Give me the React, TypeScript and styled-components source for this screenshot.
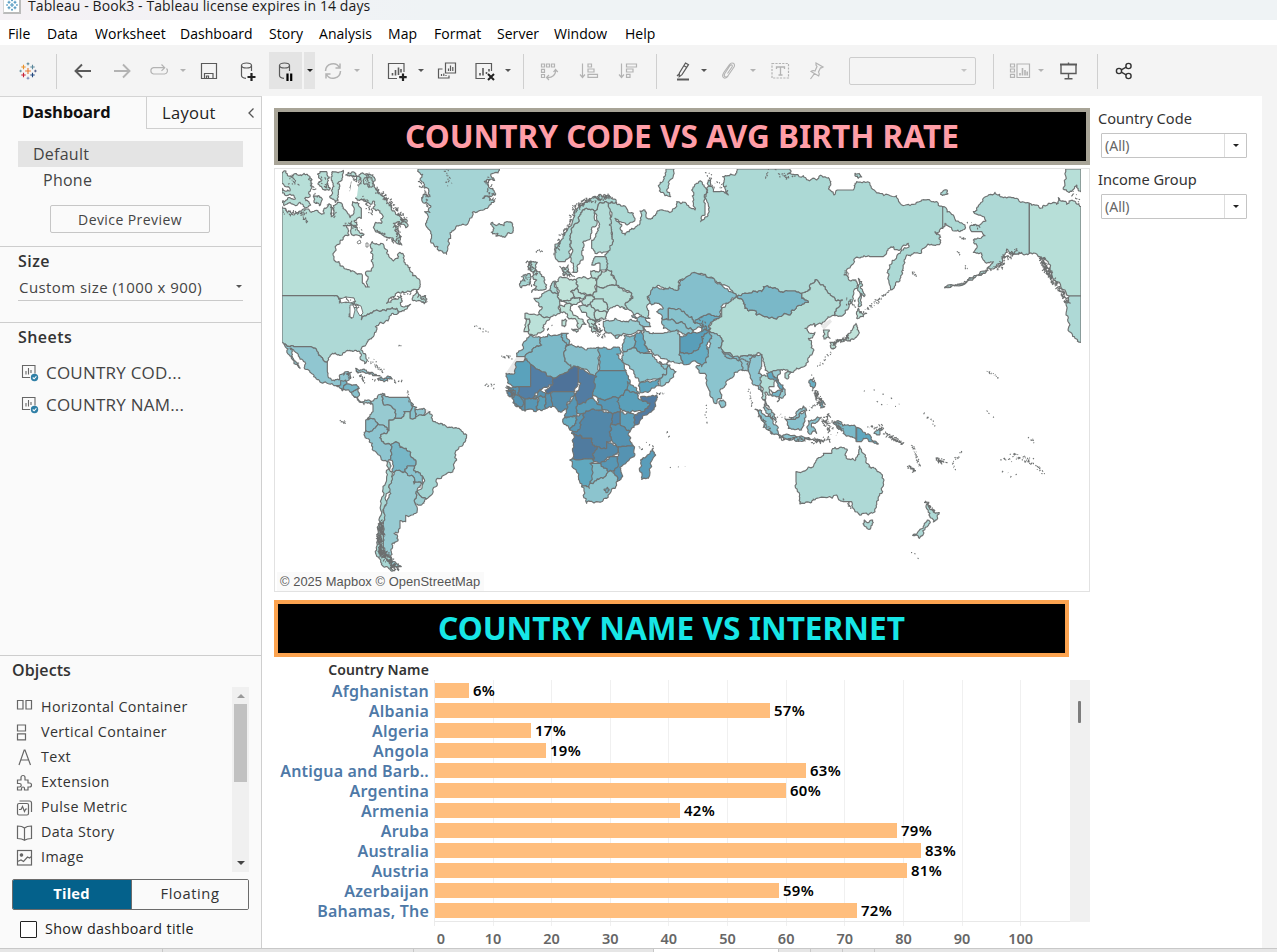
import React from "react";
import styled, { createGlobalStyle } from "styled-components";

const Global = createGlobalStyle`
  *{box-sizing:border-box}
  html,body{margin:0;padding:0;background:#fff}
  body{width:1277px;height:952px;overflow:hidden;font-family:"Open Sans","Noto Sans",sans-serif;color:#333}
`;

/* ---------- frame ---------- */
const Window = styled.div`width:1277px;height:952px;display:flex;flex-direction:column;overflow:hidden;background:#fff;`;
const TitleBar = styled.div`height:20px;flex:none;display:flex;align-items:flex-start;gap:7px;padding-left:3px;
  background:linear-gradient(90deg,#f5f1f5 0,#eff3f5 430px);
  span{font:14px/12px "Open Sans",sans-serif;letter-spacing:.1px;color:#1b1b1b;white-space:pre}`;
const AppBadge = styled.div`width:18px;height:18px;margin-top:-4px;background:#fff;border:1px solid #d5d5d5;border-right:2px solid #bbb;border-bottom:2px solid #bbb;flex:none;
  svg{display:block}`;
const MenuBar = styled.div`height:25px;flex:none;display:flex;align-items:center;background:#fff;padding:2px 0 0 8px;`;
const MenuItem = styled.span<{ $w: number }>`width:${p => p.$w}px;font:14px/20px "Open Sans",sans-serif;letter-spacing:.04px;color:#000;white-space:nowrap`;
const ToolBar = styled.div`height:51px;flex:none;display:flex;align-items:center;background:#f4f4f4;`;
const Sep = styled.i<{ $ml: number }>`width:1px;height:35px;margin-left:${p => p.$ml}px;background:#cfcfcf;flex:none;margin-top:1px`;
const Icon = styled.svg<{ $ml?: number; $c?: string; $sw?: number }>`width:24px;height:24px;flex:none;margin-left:${p => p.$ml ?? 0}px;fill:none;stroke:${p => p.$c ?? "#5a5a5a"};stroke-width:${p => p.$sw ?? 1.2};display:block`;
const Caret = styled.i<{ $ml?: number; $c?: string }>`width:8px;flex:none;margin-left:${p => p.$ml ?? 0}px;display:flex;justify-content:center;
  &::after{content:"";border:3px solid transparent;border-bottom:0;border-top-color:${p => p.$c ?? "#555"}}`;
const BigCaret = styled.i`width:21px;display:flex;justify-content:center;
  &::after{content:"";border:3.5px solid transparent;border-bottom:0;border-top-color:#222}`;
const Pressed = styled.div<{ $w: number; $ml: number }>`width:${p => p.$w}px;height:37px;margin-left:${p => p.$ml}px;background:#e4e4e4;display:flex;align-items:center;justify-content:center;flex:none`;
const EmptySelect = styled.div`width:127px;height:28px;margin-left:20px;border:1px solid #cdcdcd;border-radius:2px;display:flex;align-items:center;justify-content:flex-end;padding-right:7px;flex:none`;
const Body = styled.div`height:852px;flex:none;display:flex;`;

/* ---------- side panel ---------- */
const Side = styled.aside`width:262px;flex:none;background:#fafafa;border-right:1px solid #cfcfcf;border-top:1px solid #d4d4d4;display:flex;flex-direction:column;font-family:"Open Sans",sans-serif;`;
const Tabs = styled.div`display:flex;height:32px;margin-bottom:12px`;
const ActiveTab = styled.div`width:146px;padding-left:22px;font-weight:700;font-size:16.5px;line-height:30px;letter-spacing:-.15px;color:#111`;
const IdleTab = styled.div`flex:1;border-left:1px solid #cfcfcf;border-bottom:1px solid #cfcfcf;display:flex;align-items:center;justify-content:space-between;padding:0 6px 0 15px;font-size:16.5px;letter-spacing:.3px;color:#222;`;
const Device = styled.div<{ $on?: boolean; $pl: number }>`margin:0 18px;height:26px;line-height:26px;font-size:16px;letter-spacing:.25px;padding-left:${p => p.$pl}px;background:${p => p.$on ? "#e4e4e4" : "transparent"};color:#444`;
const PreviewButton = styled.div`width:160px;height:28px;margin:12px 0 0 50px;border:1px solid #c6c6c6;border-radius:2px;text-align:center;font-size:14px;line-height:27px;letter-spacing:.42px;color:#444;`;
const Section = styled.section<{ $h: number; $mt?: number }>`height:${p => p.$h}px;margin-top:${p => p.$mt ?? 0}px;border-top:1px solid #cdcdcd;flex:none`;
const Heading = styled.h3<{ $l?: number }>`margin:0 0 0 ${p => p.$l ?? 18}px;font-size:16px;line-height:28px;font-weight:600;letter-spacing:${p => p.$l ? .1 : .45}px;color:#333`;
const SizeField = styled.div`margin:0 18px;height:26px;border-bottom:1px solid #c9c9c9;display:flex;align-items:center;justify-content:space-between;padding:0 0 2px 1px;font-size:15px;letter-spacing:.43px;color:#444`;
const SheetList = styled.div`padding-top:5px`;
const SheetRow = styled.div`height:32px;display:flex;align-items:center;padding-left:19px;gap:5px;font-size:17px;letter-spacing:.22px;color:#444`;
const ObjectsArea = styled.div`display:flex;justify-content:space-between;margin:3px 12px 0 12px;height:185px`;
const ObjectList = styled.div`padding-top:7px;`;
const ObjectRow = styled.div`height:25px;display:flex;align-items:center;gap:5px;font-size:14.3px;color:#333;letter-spacing:.4px;svg{margin-top:3px}`;
const Scroll = styled.div`width:17px;background:#f0f0f0;display:flex;flex-direction:column;align-items:center;padding:7px 0;
  b{width:13px;height:78px;background:#c1c1c1;margin-top:6px}
  b+i{margin-top:auto}`;
const Up = styled.i`border:4px solid transparent;border-top:0;border-bottom-color:#999`;
const Down = styled.i`border:4px solid transparent;border-bottom:0;border-top-color:#444`;
const Toggle = styled.div`display:flex;height:31px;margin:7px 12px 0;border:1px solid #6b6b6b;border-radius:2px;overflow:hidden`;
const ToggleHalf = styled.div<{ $on?: boolean }>`width:${p => p.$on ? 120 : 116}px;margin:${p => p.$on ? "-1px 0 -1px -1px" : "0"};padding-top:${p => p.$on ? 1 : 0}px;background:${p => p.$on ? "#04618b" : "#fafafa"};color:${p => p.$on ? "#fff" : "#333"};font-weight:${p => p.$on ? 700 : 400};text-align:center;font-size:14.7px;letter-spacing:${p => p.$on ? .2 : .6}px;line-height:27px;border-right:${p => p.$on ? "1px solid #6b6b6b" : "0"}`;
const Check = styled.label`display:flex;align-items:center;gap:8px;margin:9px 0 0 20px;font-size:14.3px;line-height:19px;letter-spacing:.38px;color:#222;
  i{width:17px;height:17px;border:1.5px solid #222;border-radius:1px;background:#fff;margin-top:2px}`;

/* ---------- dashboard ---------- */
const Stage = styled.main`width:1000px;flex:none;padding:12px 0 0 12px;display:flex;gap:8px;background:#fff;`;
const Board = styled.div`width:816px;flex:none;`;
const Banner = styled.h1<{ $w: number; $bd: string; $c: string }>`margin:0;width:${p => p.$w}px;height:57px;border:4px solid ${p => p.$bd};background:#000;color:${p => p.$c};
  font:700 31.6px/48px "Noto Sans",sans-serif;text-align:center;white-space:nowrap;`;
const MapCard = styled.div`width:816px;height:424px;margin:3px 0 8px;border:1px solid #e2e2e2;display:flex;flex-direction:column;padding-left:7px;
  svg{display:block;flex:none}`;
const Credit = styled.div`font:12.9px/19px "Liberation Sans",Arial,sans-serif;color:#555;margin-left:-5px;width:207px;padding-left:3px;letter-spacing:.05px;background:#fafafa;white-space:nowrap`;
const Gutter = styled.div`flex:1;background:#f4f4f4`;
const Filters = styled.div`flex:1`;
const FilterName = styled.div`font:14.6px/21px "Noto Sans",sans-serif;height:20px;color:#333;margin-bottom:5px;white-space:nowrap`;
const FilterBox = styled.div`margin:0 15px 11px 3px;width:146px;height:25px;border:1px solid #c4c4c4;border-radius:1px;display:flex;align-items:center;color:#666;
  span{flex:1;padding-left:3px;border-right:1px solid #ddd;height:23px;font:14px/24px "Noto Sans",sans-serif}`;

const gridLines = "repeating-linear-gradient(90deg,transparent 0 57.6px,#f0f0f0 57.6px 58.62px)";
const ChartHead = styled.div`width:155px;height:23px;text-align:right;font:600 14px/25px "Noto Sans",sans-serif;letter-spacing:.12px;color:#333`;
const ChartBody = styled.div`display:flex;height:242px;width:816px`;
const Names = styled.div`width:155px;margin-right:5px;text-align:right;font:600 16px/22px "Noto Sans",sans-serif;letter-spacing:.2px;color:#4e79a7;div{height:20px;white-space:nowrap}`;
const Plot = styled.div`width:636px;border-bottom:1px solid #e8e8e8;border-left:1px solid #ececec;background:${gridLines};`;
const Ticks = styled.div`width:636px;height:4px;margin-left:160px;border-left:1px solid #ececec;background:${gridLines};`;
const BarRow = styled.div`height:20px;display:flex;align-items:center;gap:4px;font:600 14.9px/20px "Noto Sans",sans-serif;letter-spacing:.35px;color:#000;`;
const Bar = styled.i`height:15px;background:#ffbe7d;flex:none;margin-top:1px`;
const ChartScroll = styled.div`width:20px;background:#f0f0f0;padding:21px 0 0 8px;b{display:block;width:3px;height:22px;background:#7d7d7d;border-radius:1px}`;
const Axis = styled.div`display:flex;margin-left:131px;font:600 14.5px/20px "Noto Sans",sans-serif;color:#666;padding-top:2px;
  span{width:58.65px;flex:none;text-align:center} span:first-child{padding-left:13px}`;
const BottomStrip = styled.div`height:4px;flex:none;border-top:1px solid #c8c8c8;background:#e6e6e6;display:flex;
  i{height:4px;border-right:1px solid #c8c8c8} i:nth-child(4){background:#fff}`;

/* ---------- map ---------- */
type Shape = [string, string];
const noise = (a: number, b: number, c: number, d: number) => {
  const s = Math.sin(a * 12.9898 + b * 78.233 + c * 37.719 + d * 4.581) * 43758.5453;
  return s - Math.floor(s) - 0.5;
};
// Splits a border between two points into an irregular line; both neighbours get the same line.
const split = (a: number[], b: number[], n: number): number[][] => {
  const dx = b[0] - a[0], dy = b[1] - a[1], len = Math.hypot(dx, dy);
  if (n === 0 || len < 5 || dx === 0 || dy === 0) return [b];
  const f = a[0] < b[0] || (a[0] === b[0] && a[1] < b[1]);
  const [p, q] = f ? [a, b] : [b, a];
  const k = noise(p[0], p[1], q[0], q[1]) * 0.6 * Math.min(1, 20 / len);
  const m = [(p[0] + q[0]) / 2 - (q[1] - p[1]) * k, (p[1] + q[1]) / 2 + (q[0] - p[0]) * k];
  return [...split(a, m, n - 1), ...split(m, b, n - 1)];
};
const outline = (pts: string, depth: number) => {
  const v = pts.trim().split(/\s+/).map(s => s.split(",").map(Number));
  let out = [v[0]];
  v.forEach((p, i) => { out = out.concat(split(p, v[(i + 1) % v.length], depth)); });
  return "M" + out.map(p => p[0].toFixed(1) + "," + p[1].toFixed(1)).join("L") + "Z";
};

const CA = "#b7dfd8", US = "#aed9d6", MX = "#90c6d0", RU = "#acd9d5", NODATA = "#e8e8e8";

const northAmerica: Shape[] = [
  [CA, "24,125 38,140 60,150 78,138 100,132 112,142 128,136 150,146 158,128 165,116 172,128 172,155 180,140 178,122 190,112 205,118 214,135 228,158 238,148 236,110 250,112 262,130 262,160 240,168 250,180 236,182 208,182 222,192 225,210 200,225 185,250 180,285 195,290 198,302 225,314 250,328 265,330 265,350 275,366 286,366 280,345 275,328 292,318 298,300 292,285 290,262 288,240 295,230 320,235 340,255 350,280 358,288 372,280 378,262 388,278 400,300 408,318 430,340 438,355 436,368 400,378 370,382 348,400 338,415 360,402 380,395 385,408 380,420 400,425 410,418 390,438 372,445 368,430 355,428 345,432 308,435 285,448 262,464 264,444 262,430 245,422 240,400 210,402 178,392 24,392"],
  [CA, "215,30 232,22 246,30 245,45 230,62 232,82 245,100 270,102 290,118 300,108 298,130 318,138 328,155 322,175 305,172 298,188 320,205 345,218 365,230 380,238 376,208 362,195 372,185 358,175 375,170 395,188 400,168 378,155 352,128 330,95 310,75 300,65 302,40 285,28 255,30 262,50 248,66 255,34 236,34"],
  [CA, "24,25 36,18 52,35 72,30 90,25 108,35 112,62 108,95 92,100 110,120 88,124 78,112 64,122 48,112 30,122 24,108 48,98 64,102 46,88 24,84 24,70 48,78 30,60 24,55"],
  [CA, "138,20 158,20 166,36 160,58 168,72 150,74 132,55 144,45 134,38"],
  [CA, "175,20 208,16 206,34 190,55 196,72 192,98 184,112 168,98 172,76 180,64 172,42"],
  [CA, "118,94 134,92 142,110 136,122 120,112"],
  [CA, "270,42 288,36 298,50 290,66 272,58"],
  [CA, "235,180 250,188 270,208 262,218 250,210 240,212 230,196"],
  [CA, "415,405 428,375 434,390 455,392 456,412 440,408"],
  ["#a5d4d5", "432,12 446,28 438,42 450,66 465,78 468,95 448,88 445,110 470,122 468,142 452,140 460,165 455,180 470,205 480,240 495,258 518,268 524,240 530,212 545,187 580,178 595,142 630,134 662,108 640,94 626,100 655,92 664,90 655,70 635,50 662,46 650,30 672,24 676,12"],
  [RU, "650,178 656,172 666,182 676,176 690,182 708,170 718,188 712,205 692,217 665,213 672,206 652,202 660,190"],
  [US, "24,392 178,392 200,405 196,414 218,412 236,402 240,414 228,428 225,455 232,460 240,428 256,430 264,444 262,464 285,448 308,435 345,432 355,428 368,430 372,445 345,455 342,468 318,472 304,485 298,515 280,530 265,545 268,565 276,580 272,596 262,585 258,562 240,558 215,560 205,570 175,565 160,590 145,578 130,560 110,545 60,545 30,537 24,533"],
  [MX, "30,537 60,545 110,545 130,560 145,578 160,590 160,620 170,640 195,645 205,627 232,622 225,645 212,652 200,662 180,662 150,652 125,638 108,622 92,600 75,575 60,558 48,550 55,575 74,594 78,610 60,596 46,570"],
  [MX, "245,610 270,612 295,622 318,632 296,632 270,622 248,620"],
  ["#72b5c7", "318,636 345,634 355,642 340,645 320,646"],
];
const southAmerica: Shape[] = [
  ["#75b6c7", "188,48 200,45 200,32 215,30 218,42 205,62"],
  ["#75b6c7", "205,62 218,42 250,48 255,55 232,68"],
  ["#88c2cd", "232,68 255,55 250,82 240,80"],
  ["#97cad1", "240,80 250,82 262,96 285,90 296,102 285,98 270,104 255,95"],
  [NODATA, "450,113 470,125 458,138 446,138"],
  ["#97cad1", "297,108 290,98 310,80 332,72 325,90 330,105 355,112 362,145 345,150 345,182 325,165 290,145 280,145 297,125"],
  ["#8ac3cf", "332,72 345,82 375,82 405,82 412,98 408,125 390,125 382,145 362,145 355,112 330,105 325,90"],
  ["#87c2cd", "412,98 428,112 425,140 408,145 408,125"],
  ["#90c6d0", "428,118 450,115 448,136 425,138"],
  ["#86c0cd", "275,150 290,145 310,158 290,184 275,182"],
  ["#8ec5d0", "275,182 290,184 310,158 325,165 345,182 320,195 322,210 335,222 350,225 348,270 340,275 305,245 295,220 270,194"],
  ["#a3d4d3", "345,182 345,150 362,145 382,145 390,125 408,125 408,145 425,140 448,136 468,125 475,150 500,160 530,172 555,175 578,195 575,212 550,240 548,270 530,308 490,325 485,350 457,387 430,362 450,335 445,318 425,308 422,288 425,270 412,262 410,248 378,232 375,220 350,225 335,222 322,210 320,195"],
  ["#77b7c7", "350,225 375,220 378,232 410,248 412,262 425,270 422,288 400,288 392,305 360,308 348,270"],
  ["#89c3cf", "392,305 400,288 422,288 425,308 445,318 445,340 420,342 422,330"],
  ["#9bcdd1", "430,362 457,387 445,402 422,397"],
  ["#98cbd2", "360,308 392,305 422,330 420,342 445,340 430,362 422,397 430,415 425,430 395,436 395,455 378,452 378,475 372,488 360,490 372,512 355,520 352,545 350,560 330,550 325,520 330,480 328,440 335,400 345,360 350,325"],
  ["#a8d7d4", "340,275 348,280 355,310 345,345 335,390 330,430 328,480 328,550 350,560 352,590 362,602 335,590 320,575 308,540 312,480 320,420 330,370 338,320"],
  ["#98cbd2", "352,562 360,575 382,590 352,590"],
];
const europe: Shape[] = [
  [RU, "498,12 522,12 510,45 500,75 512,95 495,92 478,78 475,62 490,45"],
  ["#acd9d5", "350,112 325,118 315,110 300,112 285,138 260,130 240,150 228,175 215,200 210,225 215,250 205,280 195,290 175,290 165,275 165,238 190,220 200,200 215,180 222,150 250,120 275,100 300,88 332,96"],
  ["#b3dcd7", "260,130 285,138 290,180 275,188 272,210 248,232 250,255 240,290 230,322 218,322 212,290 215,250 210,225 215,200 228,175 240,150"],
  ["#b3dcd7", "300,112 315,110 325,118 330,160 328,180 335,200 340,228 325,258 285,265 275,250 275,225 290,205 298,185 290,160 285,138"],
  ["#b5ddd7", "88,290 112,292 105,310 120,320 135,345 140,360 130,375 95,382 110,365 100,360 110,345 95,335 102,320 85,310"],
  ["#a8d7d4", "70,330 90,326 92,340 88,360 65,368 62,348"],
  ["#b5ddd7", "188,308 205,300 200,320 212,328 190,332"],
  ["#c0e3da", "168,352 190,338 228,344 232,372 212,380 225,400 205,408 180,405 174,385"],
  ["#bfe3d9", "228,344 250,335 288,340 290,380 278,392 250,385 232,372"],
  ["#aedad6", "102,400 118,400 125,388 150,375 174,385 180,405 175,430 180,445 160,450 150,458 118,448 125,425"],
  ["#bbe1d9", "75,445 118,448 150,458 130,480 132,495 110,510 90,508 85,500 88,462 75,460"],
  ["#bfe3d9", "75,460 88,462 85,500 72,500"],
  ["#bfe3d9", "178,425 205,415 215,422 210,435 235,460 258,478 245,480 240,492 235,475 215,460 195,442 180,440"],
  ["#bfe3d9", "215,492 235,494 230,502"], ["#bfe3d9", "186,465 196,462 194,485 186,482"],
  ["#b9e0d8", "232,372 250,385 260,392 240,398 225,400 212,380"],
  ["#b9e0d8", "225,400 240,398 245,410 230,418 205,415 180,405 205,408"],
  ["#bbe1d9", "260,392 278,392 285,402 270,418 250,420 245,410"],
  ["#a8d7d4", "152,362 168,350 174,385 150,375"],
  ["#b9e0d8", "290,345 305,320 335,318 348,360 318,366 290,362"],
  ["#b9e0d8", "272,318 300,315 305,320 290,345 288,340 275,335"],
  ["#afdad6", "285,275 315,275 320,290 316,315 300,315 300,295 275,300"],
  ["#b5ddd7", "290,362 318,366 348,360 365,370 395,385 398,400 375,420 382,432 355,422 340,425 325,435 320,415 310,402 285,402 278,392 290,380"],
  ["#bbe1d9", "285,402 310,402 320,415 325,435 320,445 285,440 270,418"],
  ["#c0e3da", "285,440 320,445 318,462 290,465"],
  ["#b9e0d8", "250,420 270,418 285,440 290,465 272,468 260,445 240,432 235,425"],
  ["#b9e0d8", "262,466 290,465 305,465 285,478 295,495 278,502 268,485"],
  ["#9bcdd1", "310,470 345,460 375,470 412,466 430,480 430,498 370,505 340,510 318,500 310,485"],
  ["#9bcdd1", "345,515 360,512 352,520"],
  ["#8ec5d0", "395,452 430,455 440,470 452,485 430,485 412,466"],
  ["#84bfcc", "442,395 470,365 500,372 535,375 540,345 590,325 640,340 665,360 710,395 690,410 665,430 660,452 620,450 600,460 585,475 575,455 540,440 505,430 505,465 485,460 470,440 490,430 475,415 455,420 450,410"],
  ["#87c2cd", "505,430 540,432 560,450 575,455 585,475 605,468 608,482 580,498 545,470 505,465"],
  ["#86c1cd", "485,460 505,465 545,470 580,498 575,505 560,510 530,495 490,490"],
  ["#68aec4", "585,475 600,458 620,450 660,452 632,472 625,485 632,490 605,500 608,482"],
  ["#98cbd2", "428,485 445,500 465,505 490,505 530,495 540,515 540,560 548,595 510,590 480,575 455,560 435,530 425,510"],
  ["#599eb9", "540,515 560,510 575,505 605,500 632,490 625,500 605,515 600,540 575,565 540,560"],
  ["#66adc3", "548,595 540,560 575,565 600,540 605,515 625,500 635,520 620,550 625,575 605,605 590,592"],
  ["#5fa8c0", "405,510 425,500 435,530 450,560 430,565 400,548"],
  ["#7bbac9", "372,512 405,510 400,548 375,560 368,545"],
  ["#8ac4ce", "368,562 375,560 400,548 430,565 455,565 480,595 500,605 500,625 480,640 420,652 405,635 385,600 365,580"],
  ["#5da3bd", "418,655 480,640 478,662 420,683"],
  ["#8ac4ce", "480,640 500,625 500,605 510,600 528,620 515,640 480,662"],
  ["#8ac4ce", "478,590 500,598 508,588 502,608 484,604"],
];
const africa: Shape[] = [
  [NODATA, "78,83 105,83 100,95 80,95 75,128 48,128"],
  ["#86c0cc", "150,22 155,45 130,55 105,80 80,80 100,50 118,18"],
  ["#7bb9c8", "150,22 175,12 215,10 218,30 228,50 225,85 232,100 245,115 190,145 122,103 105,83 105,80 130,55 155,45"],
  ["#7bb9c8", "215,10 235,10 230,25 238,40 228,50 218,30"],
  ["#86c0cc", "228,50 238,44 255,50 290,60 325,52 328,140 265,110 245,115 232,100 225,85"],
  ["#68afc4", "325,52 355,58 388,52 392,72 380,72 408,122 328,122"],
  ["#5aa2bc", "105,86 122,103 122,170 85,170 62,163 48,130 75,128 80,95 100,95"],
  ["#527fa6", "122,103 190,145 188,165 150,180 130,205 105,208 90,200 85,170 122,170"],
  ["#4e7299", "190,145 245,115 265,112 265,150 255,185 190,185 170,190 165,180 188,165"],
  ["#527ca2", "265,112 320,140 318,180 308,205 262,222 258,190 265,150"],
  ["#5aa2bc", "328,122 408,122 420,150 408,180 385,205 345,212 325,205 310,185 320,140"],
  ["#5797b5", "325,205 345,212 385,205 390,245 365,250 340,240 320,220"],
  ["#5aa0ba", "408,180 440,188 455,208 480,220 460,245 420,250 395,240 385,205"],
  ["#61a9c1", "408,180 412,155 425,165 448,192 440,188"],
  ["#527ca2", "455,208 452,200 500,195 496,222 470,255 435,285 433,255 460,245 480,220"],
  ["#5c9fba", "390,245 420,250 433,255 435,285 420,305 390,280"],
  ["#5185a9", "365,250 390,245 390,280 362,282"],
  ["#5593b2", "362,282 390,280 420,305 422,325 430,348 385,350 365,330 358,305"],
  ["#5287a9", "280,250 320,240 365,250 362,282 358,305 365,330 350,335 350,355 322,350 308,345 305,325 275,325 270,315 245,310 255,300 270,290"],
  ["#507b9f", "245,310 270,315 275,325 305,325 308,345 322,350 308,375 312,395 240,390 250,345"],
  ["#5289aa", "308,375 322,350 350,355 350,335 380,345 385,365 360,380 340,398 312,395"],
  ["#5593b2", "385,350 430,348 432,380 390,412 398,440 380,455 372,430 382,380 385,365"],
  ["#5797b5", "332,400 360,380 382,380 376,415 355,425"],
  ["#7bb9c8", "300,400 332,400 355,425 330,445 300,460"],
  ["#60a8bf", "240,390 312,395 300,400 298,475 275,470 265,440"],
  ["#8cc4ce", "275,470 298,475 300,460 330,445 355,425 372,430 380,455 375,475 350,505 320,515 290,520"],
  ["#6fb3c6", "342,478 352,472 358,480 348,488"],
  ["#599cb8", "262,222 308,205 320,220 340,240 320,240 280,250 260,245"],
  ["#5797b5", "230,238 250,205 258,190 262,222 260,258 225,260"],
  ["#558fae", "180,188 190,185 250,185 255,195 230,238 205,245 183,232"],
  ["#66adc3", "225,262 260,258 258,280 240,300 220,280"],
  ["#5797b5", "260,258 280,250 270,290 255,305 240,300 258,280"],
  ["#5593b2", "50,168 85,170 90,200 105,208 105,243 85,230 60,200"],
  ["#5287a9", "48,182 76,182 76,195 58,200"],
  ["#5593b2", "76,195 90,200 100,215 92,236 72,218 66,205"],
  ["#5797b5", "105,208 140,205 142,240 105,243"],
  ["#5aa0ba", "140,202 165,200 168,235 142,240"],
  ["#5593b2", "130,205 150,178 170,190 165,200 140,202"],
  ["#5593b2", "165,200 180,188 183,232 168,235"],
  ["#5a9dba", "452,390 470,380 490,355 497,375 475,445 455,448 450,425"],
];
const asia: Shape[] = [
  [NODATA, "362,482 390,462 396,470 372,494"],
  [RU, "-275,118 -255,112 -230,122 -200,145 -195,160 -215,178 -240,170 -255,160 -235,178 -238,195 -225,210 -212,200 -205,190 -180,170 -175,150 -180,138 -165,135 -158,160 -140,155 -120,135 -75,130 -70,110 -45,112 -15,135 -20,100 -25,75 -10,55 5,50 12,60 18,90 15,120 15,150 2,170 24,152 25,120 20,80 25,45 40,80 60,80 85,90 70,60 68,35 100,30 115,12 270,12 262,28 310,32 320,44 350,45 365,32 385,38 392,55 390,75 402,90 412,75 460,75 470,50 510,60 540,85 590,92 600,115 640,118 665,105 700,110 728,125 760,150 795,180 780,200 755,190 735,175 728,190 705,200 720,210 722,232 695,238 665,262 640,265 620,270 610,300 605,320 590,350 572,375 567,330 568,300 590,275 610,255 625,235 612,240 600,255 580,245 560,262 550,275 510,275 475,278 455,300 432,330 445,342 468,345 470,370 460,400 430,450 405,452 410,430 427,405 410,408 385,385 370,360 345,345 330,360 325,375 305,385 285,378 262,378 240,380 215,368 190,365 185,380 160,378 110,395 65,360 40,340 -10,325 -60,345 -65,375 -100,372 -130,365 -158,395 -150,410 -158,430 -150,460 -165,460 -200,450 -230,430 -225,415 -202,400 -205,385 -235,370 -252,360 -265,318 -284,315 -280,290 -285,275 -275,258 -260,228 -265,200 -272,180 -270,160"],
  [RU, "475,340 485,350 482,370 492,395 482,385 485,420 475,425 478,380"],
  [RU, "728,80 742,76 744,86 722,88"], [RU, "465,25 485,36 475,40 465,32"],
  ["#b2dcd6", "110,395 130,410 135,430 160,436 170,450 230,462 270,450 290,425 325,412 305,400 305,385 325,375 330,360 345,345 370,360 385,385 410,408 427,405 410,430 405,452 380,462 345,485 342,475 315,490 325,500 345,502 325,520 342,555 325,590 300,610 265,620 240,615 215,625 195,615 190,590 180,565 150,570 120,577 70,560 55,548 65,520 30,500 25,485 65,455 65,430 95,405"],
  ["#7ab8c8", "110,395 160,378 185,380 190,365 215,368 240,380 262,378 285,378 305,385 305,400 325,412 290,425 270,450 230,462 170,450 160,436 135,430 130,410"],
  ["#b9e0d8", "370,495 388,495 390,520 372,522"],
  ["#c0e3da", "475,430 500,445 490,455 470,460"],
  ["#c0e3da", "468,475 476,500 465,520 435,525 405,538 408,525 440,515 458,492"],
  ["#c0e3da", "390,532 405,532 408,545 396,552"],
  ["#8bc4ce", "30,500 65,520 55,548 70,560 120,577 150,570 170,572 150,590 145,615 120,615 92,640 62,672 65,700 48,716 30,680 15,625 0,625 -12,605 5,590 20,550 28,530 18,515"],
  ["#7dbbc9", "66,560 118,580 116,588 80,578"],
  ["#90c6d0", "118,585 145,590 148,620 125,615"],
  ["#8ec5d0", "150,590 170,570 185,568 185,605 175,625 190,635 185,655 190,690 185,680 175,662 160,660 145,615"],
  ["#b2dcd6", "255,625 272,622 265,640 255,638"],
  ["#98cbd2", "215,620 240,615 232,640 255,680 250,695 232,710 238,690 250,670"],
  ["#b4ddd7", "185,632 205,630 228,645 222,665 208,665 215,690 195,682 192,706 208,728 198,720 185,698 190,672 180,645"],
  ["#5fa8c0", "200,625 215,620 232,640 250,670 240,672 228,645 205,640"],
  ["#75b6c7", "212,675 248,672 236,695 215,692"],
  [US, "988,115 988,265 965,262 940,268 920,252 908,285 875,312 855,325 810,345 735,367 800,352 850,318 880,290 850,285 845,265 820,262 830,240 820,225 855,212 845,200 815,200 810,183 845,175 858,168 820,140 835,125 850,100 885,82 910,98 950,100"],
  [CA, "988,115 1020,130 1045,115 1070,118 1075,98 1100,118 1120,108 1143,125 1143,393 1108,393 1070,350 1045,295 1020,275 988,265"],
  [US, "1108,393 1143,393 1143,532 1125,520 1105,490 1098,450"],
  [CA, "1097,12 1143,12 1143,80 1130,60 1108,82 1090,68"],
];
const oceania: Shape[] = [
  [US, "288,305 340,290 350,270 365,260 370,250 395,250 398,236 405,232 440,237 435,255 465,272 472,260 478,228 490,250 500,280 520,292 535,305 552,330 548,365 530,400 525,425 505,435 490,430 465,425 455,395 430,395 410,375 350,385 335,397 300,402 298,380 288,335"],
  [US, "493,450 505,458 518,450 517,465 507,478 497,470"],
  [US, "682,400 700,420 706,430 718,428 700,456 690,440"],
  [US, "682,450 690,455 686,465 658,505 638,496 660,478"],
  ["#89c3cf", "165,118 185,122 210,140 235,172 236,194 212,185 190,155"],
  ["#97cad1", "193,102 212,118 227,152 212,144 198,122"],
  ["#89c3cf", "235,194 275,197 332,208 300,213 260,208 238,204"],
  ["#89c3cf", "256,148 285,148 300,128 316,124 318,140 310,160 305,180 265,175"],
  ["#90c6d0", "268,142 290,135 310,108 320,122 300,128 285,148"],
  ["#89c3cf", "325,152 345,150 364,142 346,160 334,162 350,190 338,184 334,192 326,190"],
  ["#7bbac9", "400,158 422,155 428,168 440,165 468,172 468,214 450,200 430,182 412,175"],
  ["#5fa8c0", "470,172 510,195 515,210 535,222 510,215 490,205 480,215 470,215"],
  ["#89c3cf", "522,190 547,178 540,192"],
  ["#68afc4", "332,28 341,24 347,42 338,58 330,45"],
  ["#68afc4", "356,96 370,93 374,110 362,114"],
  ["#8bc4ce", "60,92 70,90 75,108 66,113 61,106"],
];

const regions: [string, Shape[]][] = [
  ["translate(700 165)", asia], ["translate(500 165)", europe], ["translate(490 330)", africa],
  ["translate(274 165)", northAmerica], ["translate(274 370)", southAmerica], ["translate(700 370)", oceania],
];

// Small islands: start x, y, end x, y, count, spread. Fringes hug a coast, scatters stand in open sea.
const fringes: number[][] = [
  [376, 188, 405, 220, 80, 2.8], [405, 220, 397, 226, 20, 2], [396, 226, 400, 242, 34, 1.6], [376, 230, 396, 242, 28, 1.5], [364, 198, 372, 212, 20, 3],
  [284, 212, 306, 213, 26, 1.8], [302, 214, 306, 221, 10, 1], [366, 172, 370, 186, 16, 3], [350, 174, 360, 182, 18, 3], [310, 176, 316, 200, 14, 2],
  [323, 178, 328, 190, 16, 4], [288, 176, 296, 186, 14, 3], [330, 205, 335, 216, 12, 2], [346, 222, 360, 228, 14, 3], [392, 298, 412, 292, 14, 1.5], [420, 296, 426, 303, 10, 1.2],
  [574, 208, 584, 201, 34, 2.4], [584, 201, 611, 196, 66, 2.2], [555, 252, 560, 240, 24, 1.3], [562, 236, 576, 210, 36, 1.4], [529, 263, 535, 273, 34, 2.4],
  [524, 276, 530, 283, 14, 2.5], [562, 269, 571, 275, 26, 2.2], [593, 322, 602, 336, 44, 3], [1041, 258, 1050, 275, 110, 2.4], [1050, 275, 1068, 302, 90, 2],
  [1003, 258, 1018, 250, 40, 2.2], [998, 268, 1004, 262, 22, 1.8], [860, 313, 889, 291, 20, .7], [380, 522, 382, 534, 60, 2.2], [379, 534, 382, 556, 140, 2.2], [383, 552, 396, 569, 110, 3.2],
  [358, 373, 364, 381, 12, 2], [372, 379, 402, 381, 14, 1.5], [781, 438, 830, 440, 60, .8], [814, 390, 822, 404, 46, 2.6], [822, 418, 832, 430, 36, 2.6],
  [814, 442, 822, 440, 14, 1.5], [886, 433, 903, 444, 44, 1.2], [908, 466, 915, 471, 22, 1], [937, 459, 944, 461, 26, 2], [847, 303, 855, 300, 6, 1],
  [447, 170, 450, 184, 12, 2.4], [420, 180, 428, 205, 22, 2.2], [485, 178, 494, 200, 26, 2.5], [833, 344, 848, 336, 28, 1.3], [847, 298, 854, 306, 10, 1.4],
  [834, 422, 842, 428, 24, 2], [770, 412, 776, 422, 10, 1.5], [706, 175, 728, 190, 24, 4], [508, 388, 514, 394, 26, 2], [778, 172, 792, 178, 14, 2.5],
  [926, 502, 933, 510, 18, .9], [1073, 192, 1080, 203, 10, 2], [757, 412, 772, 434, 24, 1.2], [702, 322, 708, 330, 16, 2.5], [968, 222, 980, 228, 6, 1],
  [346, 373, 352, 378, 10, 1.5], [345, 298, 360, 306, 10, 2], [845, 500, 850, 506, 8, 2.5], [880, 424, 882, 430, 6, 2], [828, 418, 828, 414, 8, 1.2],
];
const scatters: number[][] = [
  [474, 326, 488, 331, 9, 2], [503, 356, 512, 357, 12, 1.2], [945, 287, 960, 284, 20, .5], [960, 284, 1000, 264, 44, .8],
  [818, 367, 833, 350, 14, 1.5], [870, 309, 889, 291, 16, .7], [370, 360, 384, 372, 24, 2.6], [407, 390, 409, 402, 8, 1], [341, 421, 346, 423, 12, 1.2], [486, 383, 494, 386, 10, 2],
  [749, 388, 752, 406, 14, .8], [808, 410, 822, 400, 16, 1.5], [813, 375, 814, 382, 4, 1], [868, 426, 882, 428, 16, 2], [912, 445, 920, 465, 32, 1.3],
  [926, 414, 936, 425, 9, 2], [953, 468, 957, 455, 12, 2], [1012, 454, 1032, 462, 44, 2.5], [1002, 458, 1012, 461, 9, 1.5], [1034, 465, 1043, 473, 12, 2.5],
  [1030, 438, 1034, 443, 6, 1.5], [988, 371, 998, 377, 14, .7], [987, 411, 993, 418, 3, 1], [876, 402, 895, 406, 4, 2], [1003, 472, 1014, 475, 4, 2],
  [960, 451, 962, 452, 5, 1], [912, 552, 918, 558, 3, 1], [844, 270, 849, 275, 7, 1], [960, 237, 966, 239, 12, .8], [912, 272, 916, 275, 8, 1],
  [706, 405, 706, 421, 6, .8], [657, 393, 664, 394, 9, .7], [640, 448, 642, 449, 5, 1.5], [646, 442, 652, 446, 3, 1], [667, 431, 669, 438, 4, 2],
  [671, 467, 685, 466, 3, .6], [765, 177, 768, 170, 6, 1], [818, 440, 838, 434, 8, 1.5], [780, 415, 786, 418, 6, 2.5], [546, 330, 552, 326, 5, 1.5],
  [537, 252, 541, 250, 6, 2], [875, 388, 900, 404, 4, 1.5], [864, 391, 865, 391, 3, .5], [958, 251, 959, 253, 4, 1], [964, 266, 966, 268, 3, 1], [399, 345, 400, 346, 3, .5],
];
const strokes = (list: number[][], size: number) => list.map(([x1, y1, x2, y2, n, s], c) => {
  let d = "";
  for (let i = 0; i < n; i++) {
    const t = n > 1 ? i / (n - 1) : 0;
    const x = x1 + (x2 - x1) * t + noise(c, i, 3, 7) * 2 * s;
    const y = y1 + (y2 - y1) * t + noise(i, c, 11, 5) * 2 * s;
    d += `M${x.toFixed(1)},${y.toFixed(1)}l${(noise(i, 2, c, 9) * size).toFixed(1)},${(noise(4, i, 6, c) * size + 0.5).toFixed(1)}`;
  }
  return d;
}).join("");
const fringePath = strokes(fringes, 4.5);
const scatterPath = strokes(scatters, 2.6);

const WorldMap = () => (
  <svg width="799" height="403" viewBox="282 169 799 403">
    {regions.map(([t, shapes]) => (
      <g key={t} transform={`${t} scale(.33333)`} stroke="#6f7272" strokeWidth="3.5" strokeLinejoin="round">
        {shapes.map(([fill, pts], i) => <path key={i} d={outline(pts, fill === NODATA ? 0 : 3)} fill={fill} stroke={fill === NODATA ? "none" : undefined} />)}
      </g>
    ))}
    <path d="M942.7 206V229" stroke="#6c6f6f" strokeWidth="1.1" />
    <g fill="#fff" stroke="#6c6f6f" strokeWidth="1">
      <path d="M345 205l4-8 3-18 7 2-2 15-5 5z" stroke="none" />
      <path d="M357 242l3-2 1 3-3 1zM366 243l2 0v4l-2 0z" strokeWidth=".8" />
      <path d="M340 299l6-2 8 1 1 3-4 2-5-1-5 1zM350 305l3 0 2 5-2 8-3-1zM356 304l5 2 2 7-3 3-3-5z" strokeWidth=".9" />
    </g>
    <path d={fringePath} stroke="#6c6f6f" strokeWidth="1.100" fill="none" />
    <path d={scatterPath} stroke="#6f7272" strokeWidth="1.100" fill="none" />
  </svg>
);

/* ---------- icons ---------- */
const dim = "#b3b3b3";
const Sparkle = ({ mono, size = 24 }: { mono?: boolean; size?: number }) => {
  const p: [number, number, number, string][] = [[12, 12, 2.9, "#e8762c"], [7.5, 8, 2.2, "#eb9129"], [16.5, 8, 2.2, "#5b879b"], [7.5, 16, 2.2, "#c72035"], [16.5, 16, 2.2, "#1f457e"], [12, 4.8, 1.4, "#59879b"], [12, 19.2, 1.4, "#7b89b5"], [4.6, 12, 1.3, "#7199a6"], [19.4, 12, 1.3, "#5c6692"]];
  return <svg width={size} height={size} viewBox="0 0 24 24" fill="none">{p.map(([x, y, r, c], i) => <path key={i} d={`M${x - r} ${y}h${2 * r}M${x} ${y - r}v${2 * r}`} stroke={mono ? "#4a93bd" : c} strokeWidth={mono ? 1.6 : 1.1} />)}</svg>;
};
const Logo = styled.div`margin-left:15.5px;width:23.5px;height:24px;flex:none`;

const SheetIcon = () => (
  <svg width="22" height="22" viewBox="0 0 22 22" fill="none" stroke="#666" strokeWidth="1.1"><path d="M11 16.500H3.500v-12H16v8M7 13.500V10M9.500 13.500V7M12 12V9" /><circle cx="15.500" cy="16.500" r="3.700" fill="#2f7fa6" stroke="none" /><path d="M13.700 16.500l1.400 1.300 2.300-2.500" stroke="#fff" /></svg>
);
const objectIcons: Record<string, React.ReactNode> = {
  "Horizontal Container": <path d="M5.500 4.500h5.500v8.500H5.500zM14 4.500h5.500v8.500H14z" />,
  "Vertical Container": <path d="M5.500 4h8v6h-8zM5.500 12.800h8v6h-8z" />,
  "Text": <path d="M7 19l5.200-15h.8L18.500 19M8.800 14h8" />,
  "Extension": <path d="M5.500 9H9V6.500a2 2 0 0 1 4 0V9h3v3h1.500a2 2 0 1 1 0 4H16v3h-3.500v-1.500a1.500 1.500 0 0 0-3 0V19h-4v-3h2a1.700 1.700 0 0 0 0-3.500h-2z" />,
  "Pulse Metric": <><rect x="5.500" y="7.500" width="11" height="11.500" rx="1.500" /><path d="M7.500 5H17.500a2 2 0 0 1 2 2V16M7 13.500h2l1.500-3 2 5 1.200-2.500h1.500" /></>,
  "Data Story": <path d="M12.500 7c-2-1.800-4.500-2-7-2v12.500c2.500 0 5 .3 7 1.800 2-1.500 4.500-1.800 7-1.800V5c-2.500 0-5 .2-7 2zv12" />,
  "Image": <><rect x="5.500" y="4.500" width="14" height="14.500" /><circle cx="9.500" cy="9" r="1.200" fill="#666" /><path d="M5.500 15.500l3.500-1.500 2.500 1.500 4-4.500 2 1 2-1.500" /></>,
};

const menus: [string, number][] = [["File", 39], ["Data", 48], ["Worksheet", 85], ["Dashboard", 89], ["Story", 50], ["Analysis", 69], ["Map", 46], ["Format", 63], ["Server", 57], ["Window", 71], ["Help", 40]];
const bars: [string, number, string][] = [["Afghanistan", 34, "6%"], ["Albania", 335, "57%"], ["Algeria", 96, "17%"], ["Angola", 111, "19%"], ["Antigua and Barb..", 371, "63%"], ["Argentina", 351, "60%"], ["Armenia", 245, "42%"], ["Aruba", 462, "79%"], ["Australia", 486, "83%"], ["Austria", 472, "81%"], ["Azerbaijan", 344, "59%"], ["Bahamas, The", 422, "72%"]];

export default function App() {
  return (
    <Window>
      <Global />
      <TitleBar><AppBadge><Sparkle mono size={16} /></AppBadge><span>Tableau - Book3 - Tableau license expires in 14 days</span></TitleBar>
      <MenuBar>{menus.map(([m, w]) => <MenuItem key={m} $w={w}>{m}</MenuItem>)}</MenuBar>
      <ToolBar>
        <Logo><Sparkle /></Logo>
        <Sep $ml={17} />
        <Icon $ml={14} $sw={1.9} viewBox="0 0 24 24"><path d="M20 12H4.500M11 5.500L4.500 12l6.500 6.500" /></Icon>
        <Icon $ml={15} $sw={1.9} $c={dim} viewBox="0 0 24 24"><path d="M4 12h15.500M13 5.500l6.500 6.500-6.500 6.500" /></Icon>
        <Icon $ml={13} $c={dim} viewBox="0 0 24 24"><path d="M11 15H6.500a3.200 3.200 0 0 1 0-6.300H17M14.500 5.500l3.200 3.200-3.200 3.200M11 15h6.500a3.200 3.200 0 0 0 2-5.500" /></Icon>
        <Caret $ml={8} $c={dim} />
        <Icon $ml={10} viewBox="0 0 24 24"><path d="M4.500 4.500h15v15h-15zM7.500 19.500v-5h8.500v5M9.500 19.500v-2.500h2v2.500" /></Icon>
        <Icon $ml={15} viewBox="0 0 24 24"><ellipse cx="10.500" cy="6.500" rx="5" ry="2.500" /><path d="M5.500 6.500v10c0 1.500 2 2.500 4.500 2.800M15.500 6.500V12" /><path d="M15.500 14v8M11.500 18h8" stroke="#222" strokeWidth="2.200" /></Icon>
        <Pressed $w={33} $ml={9}><Icon viewBox="0 0 24 24"><ellipse cx="10.500" cy="6.500" rx="5" ry="2.500" /><path d="M5.500 6.500v10c0 1.500 2 2.500 4.500 2.800M15.500 6.500V12" /><path d="M13.500 14.500v7.500M17.200 14.500v7.500" stroke="#000" strokeWidth="2.200" /></Icon></Pressed>
        <Pressed $w={11} $ml={2}><Caret $c="#222" /></Pressed>
        <Icon $ml={6} $sw={1.5} $c={dim} viewBox="0 0 24 24"><path d="M4.500 12a7.500 7.500 0 0 1 14-3.500M19.500 12a7.500 7.500 0 0 1-14 3.500M19 4.500v4.500h-4.500M5 19.500V15h4.500" /></Icon>
        <Caret $ml={8} $c={dim} />
        <Sep $ml={11} />
        <Icon $ml={12} viewBox="0 0 24 24"><path d="M12 19.500H3.500v-15h15.500V13" /><path d="M7.500 16.500V14M10.500 16.500V11M13.500 16V8.500M16 13.500V10" strokeWidth="1.600" /><path d="M18 14.500v7.500M14.200 18.200h7.500" stroke="#222" strokeWidth="2.200" /></Icon>
        <Caret $ml={8} />
        <Icon $ml={10} viewBox="0 0 24 24"><path d="M10.500 4h10v10h-10zM7.500 10H3.500v9h10.500v-2.500M13.500 12V9.500M15.500 12V6.500M17.800 12V8M6.500 17v-2M8.800 17v-2.500M11 17v-1" /></Icon>
        <Icon $ml={14} viewBox="0 0 24 24"><path d="M12 19.500H3V4.500h15.500V12" /><path d="M7 16.500V14M10 16.500V9M13.500 15v-2M16 12.500V10" strokeWidth="1.600" /><path d="M15 15l6 6M21 15l-6 6" stroke="#222" strokeWidth="2" /></Icon>
        <Caret $ml={7} />
        <Sep $ml={11} />
        <Icon $ml={13} $c={dim} viewBox="0 0 24 24"><path d="M4.500 5h3v3h-3zM9.500 5h3v3h-3zM14.500 5h3v3h-3zM4.500 10.300h3v3h-3zM4.500 15.500h3v3h-3zM10 18.500c5 .5 9-2.500 8.500-7.500M12 16l-2.500 2.500L12 21M16.500 13l2-2.500 2.300 2.500" /></Icon>
        <Icon $ml={16} $c={dim} viewBox="0 0 24 24"><path d="M5.500 4.500v14M3 15.500l2.500 3 2.500-3M11 5h3.500v3H11zM11 10h6v3h-6zM11 15.300h9.500v3H11z" /></Icon>
        <Icon $ml={15} $c={dim} viewBox="0 0 24 24"><path d="M5.500 4.500v14M3 15.500l2.500 3 2.500-3M10.500 5h10v3h-10zM10.500 10h6.500v3h-6.500zM10.500 15.300H14v3h-3.500z" /></Icon>
        <Sep $ml={16} />
        <Icon $ml={14} viewBox="0 0 24 24"><path d="M14.500 4l3 1.700-6.500 10-2.800 2 .2-3.800zM12.500 6.500l3 1.700M6 17l2-2" /><path d="M6 20.500h12" strokeWidth="2" /></Icon>
        <Caret $ml={5} />
        <Icon $ml={9} $sw={1.1} $c={dim} viewBox="0 0 24 24"><path d="M10.500 14.500L15 8c1.100-1.700-1-3-2.100-1.400L7.800 14.500c-1.800 3 1.300 5 3.200 2.200L17 8c2-3.300-2.200-5.600-4.500-2.500L6.800 13.500c-2.300 3.600-.8 5.500 1 5.700 1.800 0 2.600-1 3.400-2.200" /></Icon>
        <Caret $ml={8} $c={dim} />
        <Icon $ml={11} $c={dim} viewBox="0 0 24 24"><path d="M4 4.500h16.500v14.500H4z" strokeDasharray="2.200 1.200" /><path d="M8.500 10V8h8v2M12.500 8v8M10.500 16h4" strokeWidth="1.300" /></Icon>
        <Icon $ml={13} $c={dim} viewBox="0 0 24 24"><path d="M11 4l7 4-1.500.8-1 0L13.500 13c1 1.300.8 3 .2 4L6 12.500c1-.8 2.500-1 4-.5L12 7.500 11 6zM9.500 14.500L5.500 20" /></Icon>
        <EmptySelect><Caret $c="#c4c4c4" /></EmptySelect>
        <Sep $ml={17} />
        <Icon $ml={14} $c={dim} viewBox="0 0 24 24"><path d="M2.500 5h4v3h-4zM2.500 10h4v3h-4zM2.500 15.300h4v3h-4zM9 5h12.500v13.500H9z" /><path d="M12 16.500V14M14.500 16.500V9M17 16.500V11M19.200 16.500v-4" strokeWidth="1.600" /></Icon>
        <Caret $ml={5} $c={dim} />
        <Icon $ml={11} viewBox="0 0 24 24"><path d="M4 5.500h17" strokeWidth="2" /><path d="M5 6v8.500h15V6M12.500 14.500V20M8.500 19.800h8M12.500 3.500V5" strokeWidth="1.400" /></Icon>
        <Sep $ml={17} />
        <Icon $ml={14} $sw={1.4} $c="#333" viewBox="0 0 24 24"><circle cx="7" cy="12" r="2.600" /><circle cx="16.500" cy="7" r="2.600" /><circle cx="16.500" cy="17" r="2.600" /><path d="M9.300 10.800l4.900-2.600M9.300 13.200l4.900 2.600" /></Icon>
      </ToolBar>
      <Body>
        <Side>
          <Tabs>
            <ActiveTab>Dashboard</ActiveTab>
            <IdleTab>Layout<svg width="8" height="12" viewBox="0 0 8 12" fill="none" stroke="#555" strokeWidth="1.300"><path d="M6.500 1.500L2 6l4.500 4.500" /></svg></IdleTab>
          </Tabs>
          <Device $on $pl={15}>Default</Device>
          <Device $pl={25}>Phone</Device>
          <PreviewButton>Device Preview</PreviewButton>
          <Section $h={76} $mt={13}>
            <Heading>Size</Heading>
            <SizeField>Custom size (1000 x 900)<Caret /></SizeField>
          </Section>
          <Section $h={333}>
            <Heading>Sheets</Heading>
            <SheetList>
              <SheetRow><SheetIcon />COUNTRY COD...</SheetRow>
              <SheetRow><SheetIcon />COUNTRY NAM...</SheetRow>
            </SheetList>
          </Section>
          <Section $h={292}>
            <Heading $l={12}>Objects</Heading>
            <ObjectsArea>
              <ObjectList>
                {Object.keys(objectIcons).map(k => <ObjectRow key={k}><Icon $c="#666" viewBox="0 0 24 24">{objectIcons[k]}</Icon>{k}</ObjectRow>)}
              </ObjectList>
              <Scroll><Up /><b /><Down /></Scroll>
            </ObjectsArea>
            <Toggle><ToggleHalf $on>Tiled</ToggleHalf><ToggleHalf>Floating</ToggleHalf></Toggle>
            <Check><i />Show dashboard title</Check>
          </Section>
        </Side>
        <Stage>
          <Board>
            <Banner $w={816} $bd="#a8a497" $c="#ff9da7">COUNTRY CODE VS AVG BIRTH RATE</Banner>
            <MapCard><WorldMap /><Credit>© 2025 Mapbox © OpenStreetMap</Credit></MapCard>
            <Banner $w={795} $bd="#fca34f" $c="#17e6e6">COUNTRY NAME VS INTERNET</Banner>
            <ChartHead>Country Name</ChartHead>
            <ChartBody>
              <Names>{bars.map(b => <div key={b[0]}>{b[0]}</div>)}</Names>
              <Plot>{bars.map(([n, w, v]) => <BarRow key={n}><Bar style={{ width: w }} />{v}</BarRow>)}</Plot>
              <ChartScroll><b /></ChartScroll>
            </ChartBody>
            <Ticks />
            <Axis>{[0, 10, 20, 30, 40, 50, 60, 70, 80, 90, 100].map(n => <span key={n}>{n}</span>)}</Axis>
          </Board>
          <Filters>
            {["Country Code", "Income Group"].map(f => (
              <React.Fragment key={f}>
                <FilterName>{f}</FilterName>
                <FilterBox><span>(All)</span><BigCaret /></FilterBox>
              </React.Fragment>
            ))}
          </Filters>
        </Stage>
        <Gutter />
      </Body>
      <BottomStrip>{[163, 251, 240, 125, 32, 32, 32].map((w, i) => <i key={i} style={{ width: w }} />)}</BottomStrip>
    </Window>
  );
}
